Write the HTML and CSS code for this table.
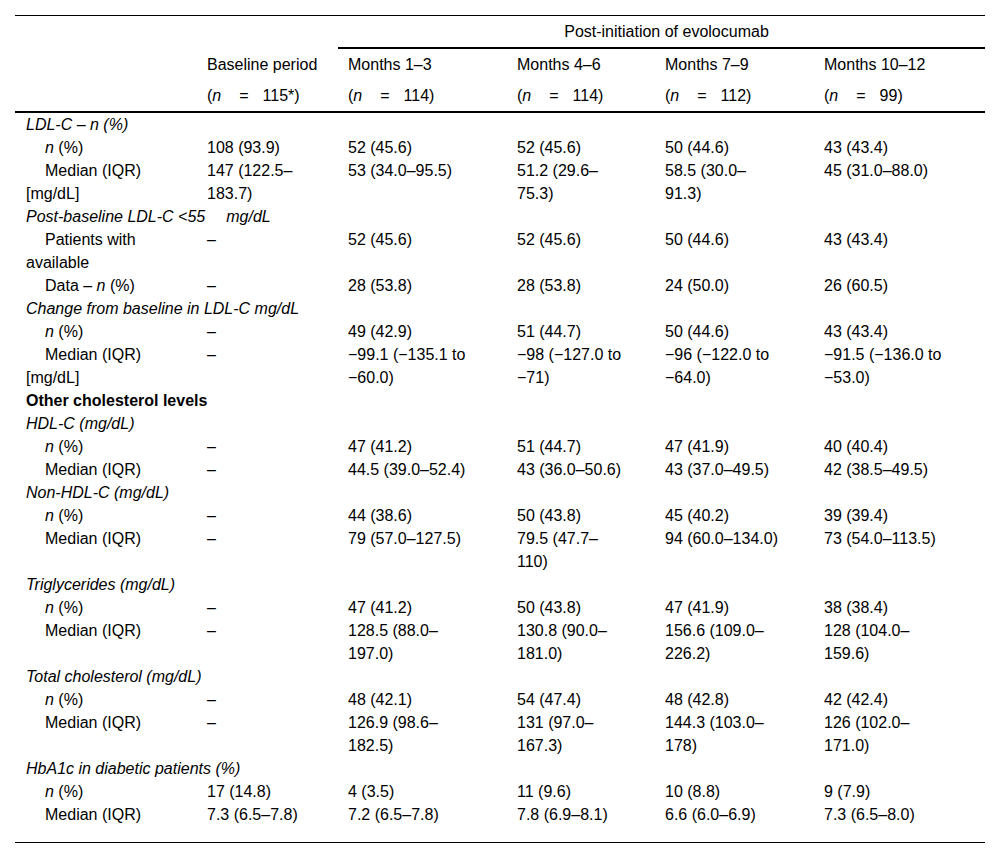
FILE: index.html
```html
<!DOCTYPE html>
<html lang="en">
<head>
<meta charset="utf-8">
<title>Lipid outcomes after initiation of evolocumab</title>
<link rel="stylesheet" href="styles.css">
</head>
<body>
<table class="data">
  <colgroup>
    <col class="c0"><col class="c1"><col class="c2"><col class="c3"><col class="c4"><col class="c5">
  </colgroup>
  <thead>
    <tr class="h1">
      <th colspan="2"></th>
      <th colspan="4" class="group">Post-initiation of evolocumab</th>
    </tr>
    <tr class="h2">
      <th></th>
      <th>Baseline period</th>
      <th>Months 1–3</th>
      <th>Months 4–6</th>
      <th>Months 7–9</th>
      <th>Months 10–12</th>
    </tr>
    <tr class="h3">
      <th></th>
      <th>(<i>n</i><span class="eq">=</span>115*)</th>
      <th>(<i>n</i><span class="eq">=</span>114)</th>
      <th>(<i>n</i><span class="eq">=</span>114)</th>
      <th>(<i>n</i><span class="eq">=</span>112)</th>
      <th>(<i>n</i><span class="eq">=</span>99)</th>
    </tr>
  </thead>
  <tbody>
    <tr class="sec"><td colspan="6"><i>LDL-C – n (%)</i></td></tr>
    <tr><td class="sub"><i>n</i> (%)</td><td>108 (93.9)</td><td>52 (45.6)</td><td>52 (45.6)</td><td>50 (44.6)</td><td>43 (43.4)</td></tr>
    <tr><td class="sub">Median (IQR) [mg/dL]</td><td>147 (122.5–183.7)</td><td>53 (34.0–95.5)</td><td>51.2 (29.6–75.3)</td><td>58.5 (30.0–91.3)</td><td>45 (31.0–88.0)</td></tr>

    <tr class="sec"><td colspan="6"><i>Post-baseline LDL-C &lt;55<span class="gap"></span>mg/dL</i></td></tr>
    <tr><td class="sub">Patients with available</td><td>–</td><td>52 (45.6)</td><td>52 (45.6)</td><td>50 (44.6)</td><td>43 (43.4)</td></tr>
    <tr><td class="sub">Data – <i>n</i> (%)</td><td>–</td><td>28 (53.8)</td><td>28 (53.8)</td><td>24 (50.0)</td><td>26 (60.5)</td></tr>

    <tr class="sec"><td colspan="6"><i>Change from baseline in LDL-C mg/dL</i></td></tr>
    <tr><td class="sub"><i>n</i> (%)</td><td>–</td><td>49 (42.9)</td><td>51 (44.7)</td><td>50 (44.6)</td><td>43 (43.4)</td></tr>
    <tr><td class="sub">Median (IQR) [mg/dL]</td><td>–</td><td>−99.1 (−135.1 to −60.0)</td><td>−98 (−127.0 to −71)</td><td>−96 (−122.0 to −64.0)</td><td>−91.5 (−136.0 to −53.0)</td></tr>

    <tr class="sec"><td colspan="6"><b>Other cholesterol levels</b></td></tr>
    <tr class="sec"><td colspan="6"><i>HDL-C (mg/dL)</i></td></tr>
    <tr><td class="sub"><i>n</i> (%)</td><td>–</td><td>47 (41.2)</td><td>51 (44.7)</td><td>47 (41.9)</td><td>40 (40.4)</td></tr>
    <tr><td class="sub">Median (IQR)</td><td>–</td><td>44.5 (39.0–52.4)</td><td>43 (36.0–50.6)</td><td>43 (37.0–49.5)</td><td>42 (38.5–49.5)</td></tr>

    <tr class="sec"><td colspan="6"><i>Non-HDL-C (mg/dL)</i></td></tr>
    <tr><td class="sub"><i>n</i> (%)</td><td>–</td><td>44 (38.6)</td><td>50 (43.8)</td><td>45 (40.2)</td><td>39 (39.4)</td></tr>
    <tr><td class="sub">Median (IQR)</td><td>–</td><td>79 (57.0–127.5)</td><td>79.5 (47.7–110)</td><td>94 (60.0–134.0)</td><td>73 (54.0–113.5)</td></tr>

    <tr class="sec"><td colspan="6"><i>Triglycerides (mg/dL)</i></td></tr>
    <tr><td class="sub"><i>n</i> (%)</td><td>–</td><td>47 (41.2)</td><td>50 (43.8)</td><td>47 (41.9)</td><td>38 (38.4)</td></tr>
    <tr><td class="sub">Median (IQR)</td><td>–</td><td>128.5 (88.0–197.0)</td><td>130.8 (90.0–181.0)</td><td>156.6 (109.0–226.2)</td><td>128 (104.0–159.6)</td></tr>

    <tr class="sec"><td colspan="6"><i>Total cholesterol (mg/dL)</i></td></tr>
    <tr><td class="sub"><i>n</i> (%)</td><td>–</td><td>48 (42.1)</td><td>54 (47.4)</td><td>48 (42.8)</td><td>42 (42.4)</td></tr>
    <tr><td class="sub">Median (IQR)</td><td>–</td><td>126.9 (98.6–182.5)</td><td>131 (97.0–167.3)</td><td>144.3 (103.0–178)</td><td>126 (102.0–171.0)</td></tr>

    <tr class="sec"><td colspan="6"><i>HbA1c in diabetic patients (%)</i></td></tr>
    <tr><td class="sub"><i>n</i> (%)</td><td>17 (14.8)</td><td>4 (3.5)</td><td>11 (9.6)</td><td>10 (8.8)</td><td>9 (7.9)</td></tr>
    <tr class="last"><td class="sub">Median (IQR)</td><td>7.3 (6.5–7.8)</td><td>7.2 (6.5–7.8)</td><td>7.8 (6.9–8.1)</td><td>6.6 (6.0–6.9)</td><td>7.3 (6.5–8.0)</td></tr>
  </tbody>
</table>
</body>
</html>
```

FILE: styles.css
```css
html, body {
  margin: 0;
  padding: 0;
  background: #ffffff;
}

body {
  padding: 15px;
  font-family: "Liberation Sans", Arial, sans-serif;
  font-size: 16px;
  line-height: 23px;
  color: #000000;
}

.data {
  width: 970px;
  table-layout: fixed;
  border-collapse: separate;
  border-spacing: 0;
  border-top: 1px solid #000;
  border-bottom: 1px solid #000;
}

.c0 { width: 182px; }
.c1 { width: 141px; }
.c2 { width: 169px; }
.c3 { width: 148px; }
.c4 { width: 159px; }
.c5 { width: 171px; }

.data th,
.data td {
  box-sizing: border-box;
  text-align: left;
  vertical-align: top;
  font-weight: normal;
  padding: 0;
}

/* header */
.data thead th {
  padding: 4px 0 4px 10px;
}
.data thead th:first-child {
  padding-left: 11px;
}
.h1 .group {
  text-align: center;
  border-bottom: 2px solid #000;
}
.h3 th {
  border-bottom: 2px solid #000;
}
.eq {
  margin: 0 14px 0 18px;
}

/* body */
.data tbody td {
  padding: 0 0 0 10px;
}
.data tbody td:nth-child(2) { padding-right: 15px; }
.data tbody td:nth-child(3) { padding-right: 30px; }
.data tbody td:nth-child(4) { padding-right: 30px; }
.data tbody td:nth-child(5) { padding-right: 34px; }
.data tbody td:nth-child(6) { padding-right: 36px; }

.data tbody td.sub {
  padding-left: 11px;
  padding-right: 4px;
  text-indent: 19px;
}
.data tbody .sec td {
  padding-left: 11px;
  padding-right: 0;
}
.gap {
  display: inline-block;
  width: 21px;
}

.data tbody .last td {
  padding-bottom: 16px;
}
```
